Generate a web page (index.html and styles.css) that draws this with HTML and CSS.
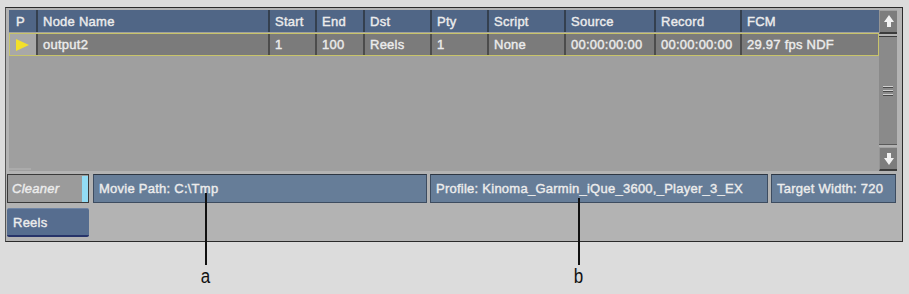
FILE: index.html
```html
<!DOCTYPE html>
<html lang="en">
<head>
    <meta charset="UTF-8">
    <title>Cleaner Export</title>
    <link rel="stylesheet" href="styles.css">
</head>
<body>
    <div class="panel">
        <div class="table-area">
            <div class="grid">
                <div class="row head">
                    <div class="cell">P</div>
                    <div class="cell">Node Name</div>
                    <div class="cell">Start</div>
                    <div class="cell">End</div>
                    <div class="cell">Dst</div>
                    <div class="cell">Pty</div>
                    <div class="cell">Script</div>
                    <div class="cell">Source</div>
                    <div class="cell">Record</div>
                    <div class="cell">FCM</div>
                </div>
                <div class="row item">
                    <div class="cell play"><span class="tri"></span></div>
                    <div class="cell">output2</div>
                    <div class="cell">1</div>
                    <div class="cell">100</div>
                    <div class="cell">Reels</div>
                    <div class="cell">1</div>
                    <div class="cell">None</div>
                    <div class="cell">00:00:00:00</div>
                    <div class="cell">00:00:00:00</div>
                    <div class="cell">29.97 fps NDF</div>
                </div>
                <div class="hbar"></div>
            </div>
            <div class="scrollbar">
                <div class="sbtn">
                    <svg width="10" height="13" viewBox="0 0 10 13"><path d="M5 0 L10 7 L7 7 L7 12 L3 12 L3 7 L0 7 Z" fill="#f2f2f2"/></svg>
                </div>
                <div class="track">
                    <span class="grip"></span>
                    <span class="grip"></span>
                    <span class="grip"></span>
                </div>
                <div class="sbtn">
                    <svg width="10" height="13" viewBox="0 0 10 13"><path d="M5 13 L10 6 L7 6 L7 1 L3 1 L3 6 L0 6 Z" fill="#f2f2f2"/></svg>
                </div>
            </div>
        </div>

        <div class="fields">
            <div class="field cleaner">Cleaner<span class="mark"></span></div>
            <div class="field path">Movie Path: C:\Tmp</div>
            <div class="field profile">Profile: Kinoma_Garmin_iQue_3600,_Player_3_EX</div>
            <div class="field target">Target Width: 720</div>
        </div>
        <div class="btn">Reels</div>
    </div>

    <div class="callout call-a"><span class="stem"></span><span class="label">a</span></div>
    <div class="callout call-b"><span class="stem"></span><span class="label">b</span></div>
</body>
</html>
```

FILE: styles.css
```css
body {
    margin: 0;
    width: 909px;
    height: 294px;
    background-color: #dcdcdc;
    font-family: 'Liberation Sans', Arial, sans-serif;
    position: relative;
    overflow: hidden;
}
.panel {
    box-sizing: border-box;
    margin: 7px 0 0 5px;
    width: 898px;
    height: 235px;
    border: 1px solid #2b2b2b;
    border-left-color: #555555;
    background-color: #b3b3b3;
    padding: 2px 0 0 2px;
}
.table-area {
    display: flex;
    height: 161px;
}
.grid {
    width: 870px;
    margin-left: 1px;
    background-color: #9f9f9f;
    position: relative;
}
.row, .field, .btn {
    font-size: 13px;
    letter-spacing: 0.25px;
    color: #ececec;
    -webkit-text-stroke: 0.4px #ececec;
}
.row {
    display: grid;
    grid-template-columns: 27px 232px 47px 48px 67px 57px 77px 90px 86px 139px;
}
.cell {
    padding-left: 5px;
    display: flex;
    align-items: center;
    white-space: nowrap;
    overflow: hidden;
}
.cell + .cell {
    border-left: 2px solid #34404f;
}
.head {
    height: 22px;
    background-color: #506686;
}
.head .cell:first-child {
    padding-left: 7px;
}
.item {
    box-sizing: border-box;
    margin-top: 1px;
    height: 23px;
    background-color: #7b7b7b;
    border: 1px solid #c8c46a;
    grid-template-columns: 26px 232px 47px 48px 67px 57px 77px 90px 86px 137px;
}
.item .cell + .cell {
    border-left: 2px solid #4c4c4c;
}
.play {
    background-color: #a8a8a8;
    padding-left: 6px;
}
.tri {
    width: 0;
    height: 0;
    border-top: 6px solid transparent;
    border-bottom: 6px solid transparent;
    border-left: 13px solid #f3e02a;
}
.hbar {
    position: absolute;
    left: 0;
    bottom: 1px;
    width: 22px;
    height: 2px;
    background-color: #ababab;
}
.scrollbar {
    width: 18px;
    display: flex;
    flex-direction: column;
    gap: 2px;
}
.sbtn {
    box-sizing: border-box;
    height: 24px;
    background-color: #7d7d7d;
    border-top: 1px solid #a2a2a2;
    border-left: 1px solid #959595;
    border-bottom: 2px solid #3c3c3c;
    display: flex;
    align-items: center;
    justify-content: center;
}
.track {
    flex: 1;
    background-color: #8a8a8a;
    border-top: 1px solid #3c3c3c;
    border-bottom: 1px solid #5a5a5a;
    display: flex;
    flex-direction: column;
    align-items: center;
    justify-content: center;
    gap: 2px;
}
.grip {
    width: 10px;
    height: 1px;
    background-color: #d0d0d0;
    border-bottom: 1px solid #4a4a4a;
}
.fields {
    display: flex;
    gap: 3px;
    margin-top: 3px;
    height: 29px;
}
.field {
    box-sizing: border-box;
    height: 29px;
    display: flex;
    align-items: center;
    padding-left: 5px;
    background-color: #667d98;
    border: 1px solid #3d4c60;
    border-top-color: #2d3642;
    white-space: nowrap;
}
.cleaner {
    width: 82px;
    margin-left: -1px;
    margin-right: 1px;
    background-color: #9b9b9b;
    border-color: #3a3a3a;
    font-style: italic;
    position: relative;
    padding-left: 4px;
}
.mark {
    position: absolute;
    right: 0;
    top: 1px;
    bottom: 0;
    width: 6px;
    background-color: #92dcf5;
}
.path {
    width: 334px;
}
.profile {
    width: 338px;
}
.target {
    width: 125px;
}
.btn {
    box-sizing: border-box;
    width: 82px;
    height: 29px;
    margin: 5px 0 0 -1px;
    padding-left: 6px;
    display: flex;
    align-items: center;
    background-color: #566d8f;
    border-top: 1px solid #7085a4;
    border-bottom: 2px solid #27346a;
    border-radius: 2px;
}
.callout {
    position: absolute;
    width: 30px;
    display: flex;
    flex-direction: column;
    align-items: center;
}
.call-a {
    left: 191px;
    top: 193px;
}
.call-b {
    left: 564px;
    top: 198px;
}
.stem {
    width: 2px;
    background-color: #111111;
}
.call-a .stem {
    height: 72px;
}
.call-b .stem {
    height: 67px;
}
.label {
    font-family: 'Liberation Sans Narrow', 'Liberation Sans', Arial, sans-serif;
    font-size: 20px;
    line-height: 22px;
    color: #111111;
    transform: scaleX(0.85);
}
```
